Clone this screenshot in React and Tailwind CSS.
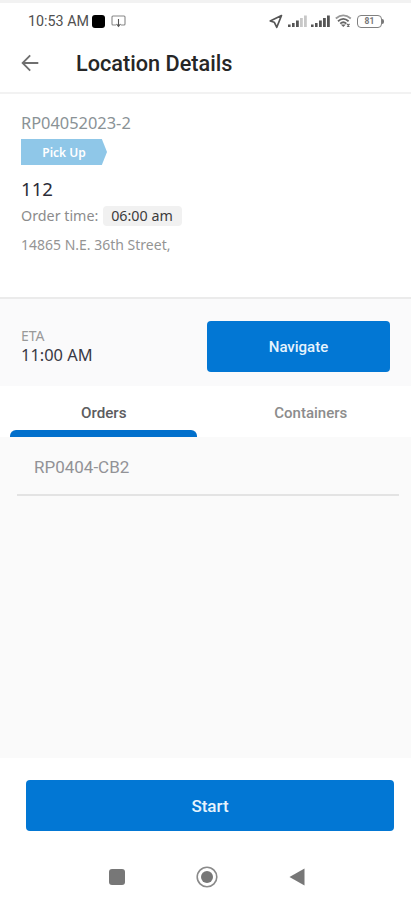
import React from 'react';

function SignalBars({ faded }) {
  return (
    <svg className="h-[14px] w-[19px]" viewBox="0 0 19 14" fill="#555">
      <rect x="0" y="10.5" width="2.6" height="2.5" />
      <rect x="4" y="9" width="2.6" height="4" />
      <rect x="8" y="6.5" width="2.8" height="6.5" />
      <rect x="12" y="4" width="2.8" height="9" fill={faded ? '#c8c8c8' : '#555'} />
      <rect x="16" y="1.5" width="2.8" height="11.5" fill={faded ? '#c8c8c8' : '#555'} />
    </svg>
  );
}

function StatusBar() {
  return (
    <div className="flex h-[37px] items-center border-t-3 border-[#f2f2f2] pr-[27px] pl-[28px] pt-0.5">
      <span className="w-[61px] whitespace-nowrap pt-[2px] text-[14.3px] text-[#505050]">10:53 AM</span>
      <span className="ml-[3px] h-[13px] w-[13px] rounded-[3px] bg-black" />
      <svg className="ml-[6px] h-[13px] w-[15px]" viewBox="0 0 15 13" fill="none" stroke="#888" strokeWidth="1.1">
        <path d="M5 10H2Q1 10 1 9V2Q1 1 2 1H13Q14 1 14 2V9Q14 10 13 10H10" />
        <path d="M7.5 4V11M5.5 9L7.5 11.3L9.5 9" stroke="#555" />
      </svg>
      <span className="flex-1" />
      <svg className="h-[15px] w-[14px]" viewBox="0 0 14 15" fill="none" stroke="#555" strokeWidth="1.7" strokeLinejoin="round">
        <path d="M12.5 1.5L1.2 7L5.2 8.2L7.8 13.3Z" />
      </svg>
      <span className="ml-[5px] flex"><SignalBars faded /></span>
      <span className="ml-[4px] flex"><SignalBars /></span>
      <svg className="ml-[5px] h-[14px] w-[17px]" viewBox="0 0 17 14" fill="none" stroke="#666" strokeWidth="1.8">
        <path d="M0.8 4.5Q8.3-1.8 15.8 4.5" stroke="#999" />
        <path d="M3 7.2Q8.3 2.6 13.6 7.2" />
        <path d="M5.2 9.6Q8.3 7 11.4 9.6" />
        <path d="M5.8 10.4L8.3 13L10.8 10.4Z" fill="#666" stroke="none" />
        <path d="M12 10L14.5 12.5M14.5 10L12 12.5" strokeWidth="1.2" />
      </svg>
      <span className="ml-[5px] flex h-[13px] w-[25px] items-center justify-center rounded-[4px] border-[1.5px] border-[#808080] text-[8.5px] leading-none font-bold text-[#777]">81</span>
      <span className="h-[5px] w-[2px] rounded-r-full bg-[#777]" />
    </div>
  );
}

function Header() {
  return (
    <header className="flex h-[57px] items-center border-b-2 border-[#f2f2f2] pb-[3px] pl-[21px]">
      <svg className="h-[18px] w-[18px]" viewBox="0 0 18 18" fill="none" stroke="#6f6f6f" strokeWidth="1.8">
        <path d="M17.3 9H1.8M9.2 1.3L1.6 9L9.2 16.7" />
      </svg>
      <h1 className="ml-[37px] whitespace-nowrap pt-[2px] text-[21.7px] leading-[28px] font-medium text-[#262626]">Location Details</h1>
    </header>
  );
}

function OrderCard() {
  return (
    <section className="flex h-[205px] flex-col items-start border-b-2 border-[#ebebeb] pt-[19px] pl-[21px] font-['Noto_Sans',sans-serif]">
      <div className="h-[20px] whitespace-nowrap text-[16.4px] leading-[20px] text-[#8a9296]">RP04052023-2</div>
      <div className="mt-[6px] flex h-[26px] w-[86px] items-center justify-center bg-[#8fc7e8] pt-[2px] text-[12px] font-semibold text-white [clip-path:polygon(0_0,94%_0,100%_50%,94%_100%,0_100%)]">Pick Up</div>
      <div className="mt-[12px] h-[24px] text-[18.6px] leading-[24px] text-[#2c2c38]">112</div>
      <div className="mt-[4px] flex h-[21px] items-center whitespace-nowrap text-[14.3px] text-[#8c8c8c]">
        <span className="w-[82px]">Order time:</span>
        <span className="flex h-[20px] w-[79px] items-center justify-center rounded-[4px] bg-[#f1f1f1] pr-px text-[#3c3c3c]">06:00 am</span>
      </div>
      <div className="mt-[9px] h-[20px] whitespace-nowrap text-[14px] leading-[20px] text-[#949494]">14865 N.E. 36th Street,</div>
    </section>
  );
}

function EtaBar() {
  return (
    <section className="flex h-[87px] items-center justify-between bg-[#fafafb] pr-[21px] pl-[21px] font-['Noto_Sans',sans-serif]">
      <div className="pt-[6px]">
        <div className="text-[14px] leading-[17px] text-[#999]">ETA</div>
        <div className="mt-px whitespace-nowrap text-[16.4px] leading-[20px] text-[#383844]">11:00 AM</div>
      </div>
      <button className="mt-[7px] h-[51px] w-[183px] rounded-[4px] bg-[#0277d4] pt-[2px] font-['Roboto',sans-serif] text-[15px] font-medium text-[#e6f3fd]">Navigate</button>
    </section>
  );
}

function Tabs() {
  return (
    <nav className="grid h-[51px] grid-cols-2 text-center font-medium">
      <div className="flex flex-col justify-end pr-[9px] pl-[10px] text-[15.2px] text-[#5c5c60]">
        <span className="pb-[7px] pl-px leading-[20px]">Orders</span>
        <span className="h-[7px] rounded-t-[6px] bg-[#0270cc]" />
      </div>
      <div className="flex flex-col justify-end pl-[5px] text-[15px] text-[#8c8c8c]">
        <span className="pb-[14px] leading-[20px]">Containers</span>
      </div>
    </nav>
  );
}

export default function App() {
  return (
    <div className="flex h-[900px] w-[411px] flex-col overflow-hidden bg-white font-['Roboto',sans-serif]">
      <StatusBar />
      <Header />
      <OrderCard />
      <EtaBar />
      <Tabs />
      <main className="h-[321px] bg-[#fafafa] pr-[12px] pl-[17px]">
        <div className="flex h-[59px] items-center border-b-2 border-[#e3e3e3] pt-[4px] pl-[17px] text-[17px] text-[#929296]">RP0404-CB2</div>
      </main>
      <footer className="flex flex-col pt-[22px]">
        <button className="ml-[26px] h-[51px] w-[368px] rounded-[4px] bg-[#0277d4] pt-[3px] text-[17px] font-medium text-[#e6f3fd]">Start</button>
        <div className="mt-[34px] ml-[109px] flex h-[24px] w-[196px] items-center justify-between">
          <span className="h-[16px] w-[16px] rounded-[3px] bg-[#777]" />
          <svg className="h-[22px] w-[22px]" viewBox="0 0 22 22" fill="none">
            <circle cx="11" cy="11" r="9.8" stroke="#8a8a8a" strokeWidth="1.6" />
            <circle cx="11" cy="11" r="6" fill="#777" />
          </svg>
          <svg className="h-[18px] w-[16px]" viewBox="0 0 16 18"><path d="M15.5 0.5V17.5L0.5 9Z" fill="#777" /></svg>
        </div>
      </footer>
    </div>
  );
}
